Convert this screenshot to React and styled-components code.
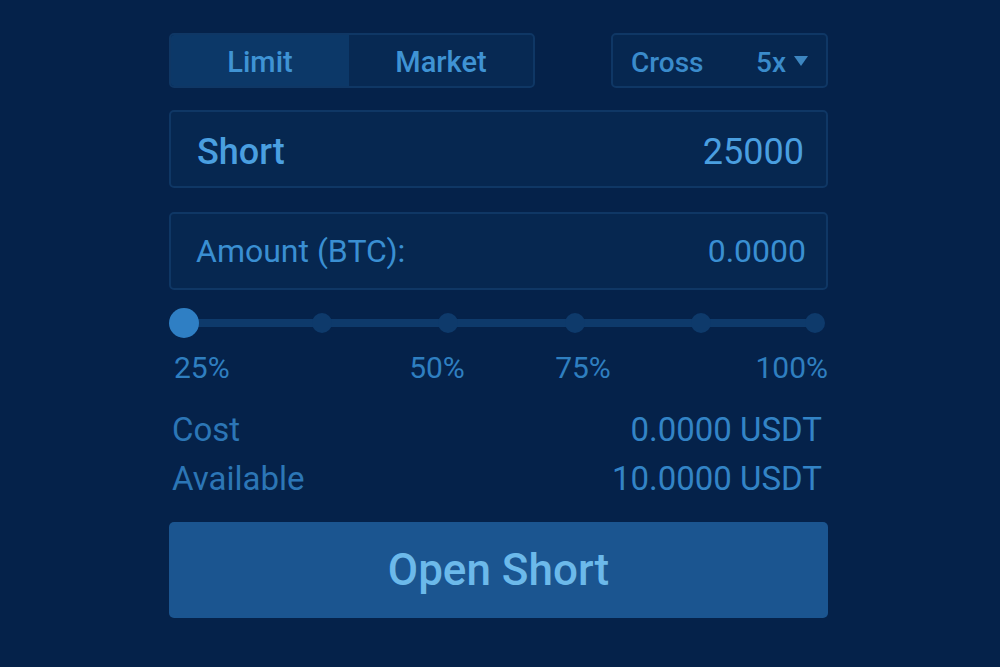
import React from "react";
import styled, { createGlobalStyle } from "styled-components";

const GlobalStyle = createGlobalStyle`
  html, body {
    margin: 0;
    padding: 0;
    background: #05224a;
    font-family: Roboto, "Liberation Sans", sans-serif;
  }
`;

const Page = styled.div`
  width: 1000px;
  height: 667px;
  background: #05224a;
  overflow: hidden;
`;

const Panel = styled.main`
  width: 659px;
  margin-left: 169px;
  padding-top: 33px;
  display: flex;
  flex-direction: column;
`;

const TopRow = styled.div`
  display: flex;
  justify-content: space-between;
`;

const Tabs = styled.div`
  width: 366px;
  height: 55px;
  box-sizing: border-box;
  display: flex;
  border: 2px solid #0f3765;
  border-radius: 5px;
  overflow: hidden;
  background: #072953;
`;

const Tab = styled.div`
  flex: ${(p) => (p.$active ? "0 0 178px" : "1")};
  display: flex;
  align-items: center;
  justify-content: center;
  padding-top: 3px;
  font-size: 29px;
  font-weight: 500;
  color: #3f93d4;
  background: ${(p) => (p.$active ? "#0c3868" : "transparent")};
`;

const Leverage = styled.div`
  width: 217px;
  height: 55px;
  box-sizing: border-box;
  display: flex;
  align-items: center;
  padding: 3px 18px 0 18px;
  border: 2px solid #0f3765;
  border-radius: 5px;
  background: #062750;
  font-size: 28px;
  font-weight: 500;
  color: #3a8bcb;
`;

const LeverageValue = styled.span`
  margin-left: auto;
  margin-right: 8px;
`;

const Caret = styled.span`
  width: 0;
  height: 0;
  border-left: 7px solid transparent;
  border-right: 7px solid transparent;
  border-top: 10px solid #3d86c0;
  margin-top: -2px;
`;

const Field = styled.div`
  height: 78px;
  box-sizing: border-box;
  margin-top: ${(p) => p.$gap}px;
  display: flex;
  align-items: center;
  justify-content: space-between;
  padding: ${(p) => (p.$strong ? "5px 22px 0 26px" : "0 20px 0 25px")};
  border: 2px solid #0f3765;
  border-radius: 5px;
  background: #062750;
  font-size: ${(p) => (p.$strong ? 36 : 32)}px;
  color: ${(p) => (p.$strong ? "#4a9fe0" : "#3a8fd2")};
`;

const FieldLabel = styled.span`
  font-weight: ${(p) => (p.$strong ? 500 : 400)};
`;

const FieldValue = styled.span`
  font-weight: 400;
`;

const Slider = styled.div`
  position: relative;
  height: 30px;
  margin-top: 18px;
`;

const Track = styled.div`
  position: absolute;
  left: 14px;
  right: 13px;
  top: 11px;
  height: 8px;
  border-radius: 4px;
  background: #0e3a6b;
`;

const Dot = styled.span`
  position: absolute;
  top: 50%;
  width: ${(p) => (p.$active ? 30 : 20)}px;
  height: ${(p) => (p.$active ? 30 : 20)}px;
  border-radius: 50%;
  transform: translate(-50%, -50%);
  background: ${(p) => (p.$active ? "#2f7fc4" : "#0e3a6b")};
`;

const Labels = styled.div`
  position: relative;
  height: 36px;
  margin-top: 12px;
  font-size: 30px;
  color: #2f7fc0;
`;

const Label = styled.span`
  position: absolute;
  top: 0;
  line-height: 36px;
  transform: translateX(${(p) => p.$shift}%);
`;

const InfoList = styled.div`
  margin-top: 24px;
  display: flex;
  flex-direction: column;
  gap: 11px;
  padding: 0 6px 0 3px;
`;

const InfoRow = styled.div`
  display: flex;
  justify-content: space-between;
  align-items: center;
  height: 38px;
  font-size: 33px;
  color: #2c76b6;
`;

const InfoValue = styled.span`
  color: #3384c6;
`;

const OpenButton = styled.button`
  margin-top: 25px;
  height: 96px;
  border: none;
  border-radius: 5px;
  background: #1b5590;
  color: #6cb9ea;
  font-family: Roboto, "Liberation Sans", sans-serif;
  font-size: 44px;
  font-weight: 500;
  cursor: pointer;
`;

const dots = [
  { x: 15, active: true },
  { x: 153 },
  { x: 279 },
  { x: 406 },
  { x: 532 },
  { x: 646 },
];

const labels = [
  { text: "25%", x: 5, shift: 0 },
  { text: "50%", x: 268, shift: -50 },
  { text: "75%", x: 414, shift: -50 },
  { text: "100%", x: 659, shift: -100 },
];

export default function App() {
  return (
    <Page>
      <GlobalStyle />
      <Panel>
        <TopRow>
          <Tabs>
            <Tab $active>Limit</Tab>
            <Tab>Market</Tab>
          </Tabs>
          <Leverage>
            Cross
            <LeverageValue>5x</LeverageValue>
            <Caret />
          </Leverage>
        </TopRow>

        <Field $gap={22} $strong>
          <FieldLabel $strong>Short</FieldLabel>
          <FieldValue>25000</FieldValue>
        </Field>

        <Field $gap={24}>
          <FieldLabel>Amount (BTC):</FieldLabel>
          <FieldValue>0.0000</FieldValue>
        </Field>

        <Slider>
          <Track />
          {dots.map((d) => (
            <Dot key={d.x} $active={d.active} style={{ left: d.x }} />
          ))}
        </Slider>

        <Labels>
          {labels.map((l) => (
            <Label key={l.text} $shift={l.shift} style={{ left: l.x }}>
              {l.text}
            </Label>
          ))}
        </Labels>

        <InfoList>
          <InfoRow>
            <span>Cost</span>
            <InfoValue>0.0000 USDT</InfoValue>
          </InfoRow>
          <InfoRow>
            <span>Available</span>
            <InfoValue>10.0000 USDT</InfoValue>
          </InfoRow>
        </InfoList>

        <OpenButton>Open Short</OpenButton>
      </Panel>
    </Page>
  );
}
